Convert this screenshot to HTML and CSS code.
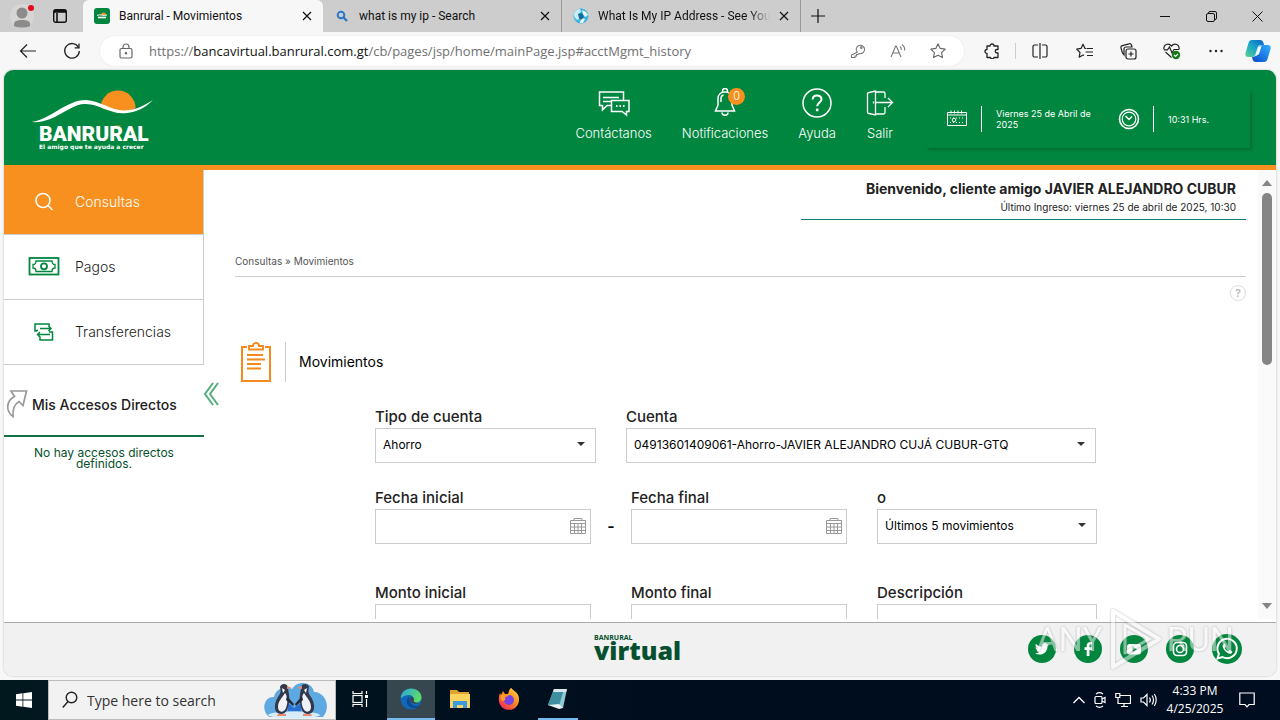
FILE: index.html
```html
<!DOCTYPE html>
<html lang="es">

<head>
    <meta charset="UTF-8">
    <meta name="viewport" content="width=device-width, initial-scale=1.0">
    <title>Banrural - Movimientos</title>
    <link rel="stylesheet" href="styles.css">
</head>

<body>
    <!-- Pestañas -->
    <div class="tab-bar">
        <button class="profile" aria-label="Perfil">
            <svg width="34" height="32" viewBox="0 0 34 32"><circle cx="17" cy="16" r="12" fill="#d8d6d4"/><circle cx="17" cy="13" r="5.5" fill="#8b8b8b"/><path d="M9 26v-2c0-3 3-4 8-4s8 1 8 4v2c-4 2-12 2-16 0z" fill="#8b8b8b"/><circle cx="26" cy="8" r="3" fill="#e30b17"/></svg>
        </button>
        <button class="tab-actions" aria-label="Pestañas">
            <svg width="16" height="16" viewBox="0 0 16 16" fill="none" stroke="#111" stroke-width="1.4"><rect x="1.7" y="1.7" width="12.6" height="12.6" rx="2"/><path d="M2 4h12M5 5v9" stroke-width="1.6"/><path d="M2 3h12" stroke-width="2"/></svg>
        </button>
        <div class="tab active">
            <svg width="16" height="16" viewBox="0 0 16 16"><rect width="16" height="16" rx="3" fill="#00863e"/><path d="M7 7a2.500 2.500 0 0 1 5 0z" fill="#f7901e"/><path d="M3 7.500c3-2 6 1 10-.5" stroke="#fff" fill="none"/><path d="M4 9.500h8" stroke="#fff" stroke-width="1.600"/></svg>
            <span class="tab-title">Banrural - Movimientos</span>
            <button class="tab-close" aria-label="Cerrar"><svg width="10" height="10" viewBox="0 0 10 10" stroke="#111" stroke-width="1.2"><path d="M1 1l8 8M9 1l-8 8"/></svg></button>
        </div>
        <div class="tab">
            <svg width="16" height="16" viewBox="0 0 16 16" fill="none" stroke="#2f78c4"><circle cx="7" cy="7" r="3.300" stroke-width="2"/><path d="M9.500 9.500l3.500 3.500" stroke-width="2.400"/></svg>
            <span class="tab-title">what is my ip - Search</span>
            <button class="tab-close" aria-label="Cerrar"><svg width="10" height="10" viewBox="0 0 10 10" stroke="#111" stroke-width="1.2"><path d="M1 1l8 8M9 1l-8 8"/></svg></button>
        </div>
        <div class="tab">
            <svg width="16" height="16" viewBox="0 0 16 16"><circle cx="8" cy="8" r="7.500" fill="#3fb4dc"/><path d="M1 6c1-3 3-5 6-5l1 3-3 2 2 3-2 3C2 11 1 9 1 6z" fill="#c9eef8"/><path d="M9 2l4 2 2 3-3 2-2-3zM8 10l4 1-2 4H7z" fill="#e9f8fc"/><path d="M5 6l4-1 2 4-3 3-2-2z" fill="#146b9c"/></svg>
            <span class="tab-title fade">What Is My IP Address - See Your</span>
            <button class="tab-close" aria-label="Cerrar"><svg width="10" height="10" viewBox="0 0 10 10" stroke="#111" stroke-width="1.2"><path d="M1 1l8 8M9 1l-8 8"/></svg></button>
        </div>
        <button class="new-tab" aria-label="Nueva pestaña"><svg width="14" height="14" viewBox="0 0 14 14" stroke="#111" stroke-width="1.200"><path d="M7 0v14M0 7h14"/></svg></button>
        <div class="window-buttons">
            <button aria-label="Minimizar"><svg width="10" height="10" viewBox="0 0 10 10" stroke="#111"><path d="M0 5.500h10"/></svg></button>
            <button aria-label="Restaurar"><svg width="11" height="11" viewBox="0 0 11 11" fill="none" stroke="#111"><rect x=".5" y="2.500" width="8" height="8" rx="1.500"/><path d="M2.500 2.500v-.5A1.500 1.500 0 0 1 4 .5h5A1.500 1.500 0 0 1 10.500 2v5A1.500 1.500 0 0 1 9 8.500"/></svg></button>
            <button aria-label="Cerrar ventana"><svg width="11" height="11" viewBox="0 0 11 11" stroke="#111"><path d="M.5.5l10 10M10.500.5l-10 10"/></svg></button>
        </div>
    </div>

    <!-- Barra de direcciones -->
    <div class="toolbar">
        <button class="tool" aria-label="Atrás"><svg width="18" height="16" viewBox="0 0 18 16" fill="none" stroke="#222" stroke-width="1.200"><path d="M17 8H1.500M8 1.500L1.500 8 8 14.500"/></svg></button>
        <button class="tool" aria-label="Actualizar"><svg width="18" height="18" viewBox="0 0 18 18" fill="none" stroke="#222" stroke-width="1.300"><path d="M15.500 5.500A7.300 7.300 0 1 0 16.300 9"/><path d="M16 1.500v4.300h-4.300"/></svg></button>
        <div class="address">
            <svg class="lock" width="14" height="16" viewBox="0 0 14 16" fill="none" stroke="#666" stroke-width="1.200"><rect x="1" y="5.500" width="12" height="9.500" rx="1.500"/><path d="M4 5.500V4a3 3 0 0 1 6 0v1.500"/><circle cx="7" cy="10.300" r=".7" fill="#666"/></svg>
            <div class="url" role="textbox" contenteditable="true" spellcheck="false" aria-label="Dirección">https://<b>bancavirtual.banrural.com.gt</b>/cb/pages/jsp/home/mainPage.jsp#acctMgmt_history</div>
            <button aria-label="Contraseñas"><svg width="16" height="16" viewBox="0 0 16 16" fill="none" stroke="#777" stroke-width="1.100"><path d="M7.200 9.200a4.200 4.200 0 1 1 2 1.300L8 11.500H6.500V13H5v1.500H1.500V12z" /><circle cx="11.300" cy="4.700" r=".8"/></svg></button>
            <button aria-label="Leer en voz alta"><svg width="17" height="16" viewBox="0 0 17 16" fill="none" stroke="#777" stroke-width="1.100"><path d="M1 14L5.700 3h.6L11 14M2.800 10h6.400M10 3.500c1 .8 1.500 2 1.300 3.500M12 1.500c2 1.500 3 3.500 2.600 6"/></svg></button>
            <button aria-label="Favorito"><svg width="16" height="16" viewBox="0 0 16 16" fill="none" stroke="#666" stroke-width="1.100" stroke-linejoin="round"><path d="M8 .8l2.200 4.600 5 .7-3.600 3.500.9 5L8 12.200l-4.500 2.400.9-5L.8 6.100l5-.7z"/></svg></button>
        </div>
        <button class="tool" aria-label="Extensiones"><svg width="16" height="16" viewBox="0 0 16 16" fill="none" stroke="#222" stroke-width="1.300" stroke-linejoin="round"><path d="M3 3h3a2 2 0 1 1 4 0h4v3.500h-1a1.700 1.700 0 1 0 0 3.500h1v4.500h-4a1.800 1.800 0 0 1-3.500 0H3V10.500a2 2 0 1 1 0-4z"/></svg></button>
        <span class="divider"></span>
        <button class="tool" aria-label="Pantalla dividida"><svg width="16" height="16" viewBox="0 0 16 16" fill="none" stroke="#222" stroke-width="1.200"><path d="M6 2H2.500A1.500 1.500 0 0 0 1 3.500v9A1.500 1.500 0 0 0 2.500 14H6M10 2h3.500A1.500 1.500 0 0 1 15 3.500v9a1.500 1.500 0 0 1-1.500 1.500H10M8 0v16"/></svg></button>
        <button class="tool" aria-label="Favoritos"><svg width="17" height="16" viewBox="0 0 17 16" fill="none" stroke="#222" stroke-width="1.200" stroke-linejoin="round"><path d="M10 5.500L9 5.400 7 1.200 5 5.400l-4.300.7L4 9.500l-.8 4.700L7 12l1 .6M10.500 5.500H17M9.500 9H17M11 12.500h6"/></svg></button>
        <button class="tool" aria-label="Colecciones"><svg width="17" height="17" viewBox="0 0 17 17" fill="none" stroke="#222" stroke-width="1.200"><rect x="6" y="6" width="10" height="10" rx="2"/><path d="M11 8.500v5M8.500 11h5M4 12L2.500 10 1 5a2 2 0 0 1 1.300-2.400L9 .8A2 2 0 0 1 11.500 2l.5 2H6a2 2 0 0 0-2 2z"/></svg></button>
        <button class="tool" aria-label="Rendimiento"><svg width="18" height="18" viewBox="0 0 18 18" fill="none" stroke="#222" stroke-width="1.200"><path d="M1 7.500C0 2.500 5.500.5 8.500 4 11.500.5 17 2.500 16 7.500M2.500 10l6 5.500M1 7.800h3.500L6.500 5 9 11l2-3.500h5"/><circle cx="13" cy="13" r="4.200" fill="#127a12" stroke="none"/><path d="M11 13l1.500 1.500L15 12" stroke="#fff"/></svg></button>
        <button class="tool" aria-label="Más"><svg width="14" height="4" viewBox="0 0 14 4" fill="#222"><circle cx="1.500" cy="2" r="1.200"/><circle cx="7" cy="2" r="1.200"/><circle cx="12.500" cy="2" r="1.200"/></svg></button>
        <button class="tool copilot" aria-label="Copilot"><svg width="26" height="24" viewBox="0 0 26 24"><defs><linearGradient id="cpA" x1="0" y1="1" x2="1" y2="0"><stop offset="0" stop-color="#5fd38d"/><stop offset=".5" stop-color="#1aa7c8"/><stop offset="1" stop-color="#0a5fc4"/></linearGradient><linearGradient id="cpB" x1="0" y1="1" x2="1" y2="0"><stop offset="0" stop-color="#0b49c8"/><stop offset="1" stop-color="#2fb0ff"/></linearGradient></defs><path d="M7 1h8c2 0 3 1 3.500 3l.5 2h-3c-2 0-3 1-3.500 3l-2 6c-.5 2-2 3-4 3H3c-2 0-3-1.500-2.500-4L3.500 4C4 2 5 1 7 1z" fill="url(#cpA)"/><path d="M19 23h-8c-2 0-3-1-3.500-3L7 18c3 0 4-1 4.500-3l2-6c.5-2 2-3 4-3H23c2 0 3 1.500 2.500 4l-3 10c-.5 2-1.500 3-3.500 3z" fill="url(#cpB)"/><path d="M11 16l2.500-8 3-1-2.500 8-3 2z" fill="#fff"/></svg></button>
    </div>

    <!-- Banca virtual -->
    <div class="page">
        <header class="header">
            <a href="#" class="logo" aria-label="Banrural">
                <svg width="124" height="66" viewBox="0 0 124 66">
                    <circle cx="88" cy="23" r="17.500" fill="#f7901e"/>
                    <path d="M66 20C78 27 98 32 122 14V40H40z" fill="#00863e"/>
                    <path d="M1 37C20 35 36 15 56 15c16 1 28 13 43 10 9-1 16-5 24-10-9 9-17 12-26 13C79 30 70 18 54 19 38 20 24 39 1 37z" fill="#fff"/>
                    <text x="9" y="56" class="logo-name">BANRURAL</text>
                    <text x="9" y="64" class="logo-slogan">El amigo que te ayuda a crecer</text>
                </svg>
            </a>
            <nav class="top-nav">
                <a href="#">
                    <svg width="32" height="30" viewBox="0 0 32 30" fill="none" stroke="#fff" stroke-width="1.500"><path d="M13 17.500H9L4.500 22v-4.500H1.500V4h24v8M5 9.500h16M5 13.500h8"/><path d="M13.500 12.500H31v11h-2.500v3.500L24 23.500H13.500z"/><path d="M18 18h1.500M21.500 18H23M25 18h1.500" stroke-width="2"/></svg>
                    Contáctanos
                </a>
                <a href="#">
                    <span class="bell">
                        <svg width="24" height="30" viewBox="0 0 24 30" fill="none" stroke="#fff" stroke-width="1.500"><path d="M9.500 4V3a2.500 2.500 0 0 1 5 0v1.500M5 17v-6.500c0-4 3-6.500 7-6.500s7 2.500 7 6.500V17l2.500 6h-19zM9 24.500c0 3.500 6 3.500 6 0M8 14v-4c0-1.500 1-2.500 2.500-3"/></svg>
                        <span class="badge">0</span>
                    </span>
                    Notificaciones
                </a>
                <a href="#">
                    <svg width="30" height="30" viewBox="0 0 30 30" fill="none" stroke="#fff"><circle cx="15" cy="15" r="14" stroke-width="1.500"/><path d="M10.700 11.500c0-5.500 8.800-5.300 8.800-.3 0 3.200-4.300 3.400-4.300 7" stroke-width="2"/><circle cx="15.200" cy="22" r=".7" stroke-width="1.500"/></svg>
                    Ayuda
                </a>
                <a href="#">
                    <svg width="28" height="30" viewBox="0 0 28 30" fill="none" stroke="#fff" stroke-width="1.300"><path d="M3 4.500L9.500 3v24L3 25.500c-1 0-1.500-.5-1.500-1.500V6c0-1 .5-1.500 1.500-1.500zM9.500 4h8a1.500 1.500 0 0 1 1.500 1.500V10M19 19v5.500a1.500 1.500 0 0 1-1.500 1.500h-8M10 14.500h16M22 10l4.500 4.500L22 19M7.500 13.500v2"/></svg>
                    Salir
                </a>
            </nav>
            <div class="clock-box">
                <svg width="22" height="20" viewBox="0 0 22 20" fill="none" stroke="#fff"><path d="M1.500 3.500h19v13h-19zM1.500 6h19M5 1.500v3M8.500 1.500v3M12 1.500v3M15.500 1.500v3"/><circle cx="8" cy="11" r="1.800"/><path d="M4 9h14M4 13.500h14" stroke-dasharray="1 2"/></svg>
                <span class="date">Viernes 25 de Abril de 2025</span>
                <svg width="22" height="22" viewBox="0 0 22 22" fill="none" stroke="#fff"><circle cx="11" cy="11" r="9.500" stroke-width="1.600"/><circle cx="11" cy="11" r="6.800" stroke-width="1.200"/><path d="M7.500 8l3.500 3.500L14 8.500" stroke-width="1.500"/></svg>
                <span class="time">10:31 Hrs.</span>
            </div>
        </header>

        <div class="middle">
            <aside class="sidebar">
                <nav class="menu">
                    <a href="#" class="selected">
                        <svg width="32" height="24" viewBox="0 0 32 24" fill="none" stroke="#fff" stroke-width="1.600"><circle cx="15" cy="11.500" r="7"/><path d="M20 16.500l4.500 4.500"/></svg>
                        Consultas
                    </a>
                    <a href="#">
                        <svg width="32" height="24" viewBox="0 0 32 24" fill="none" stroke="#00863e" stroke-width="1.800"><rect x="1.500" y="4" width="29" height="16.500"/><path d="M8 7h16c0 2.500 1 3.500 3 3.500v3.500c-2 0-3 1-3 3.500H8c0-2.500-1-3.500-3-3.500v-3.500c2 0 3-1 3-3.500z" stroke-width="1.300"/><circle cx="16" cy="12.300" r="3"/></svg>
                        Pagos
                    </a>
                    <a href="#">
                        <svg width="32" height="24" viewBox="0 0 32 24" fill="none" stroke="#00863e" stroke-width="1.500"><path d="M9 12H7V5h14v3M7 11.500h3M12 9.500h11M20.500 7l2.500 2.500-2.500 2.500M21 13h3.500v8H12v-3.500M22 15.500H9.500M12 13l-2.500 2.500L12 18"/></svg>
                        Transferencias
                    </a>
                </nav>
                <h2 class="shortcuts">
                    <svg width="22" height="30" viewBox="0 0 22 30" fill="none" stroke="#999" stroke-width="1.700"><path d="M5 2h15.500L17 16.500l-4-4c-5 3-6.500 8-6 15C-.5 22 0 12 8.500 7.500z"/></svg>
                    Mis Accesos Directos
                </h2>
                <p class="no-shortcuts">No hay accesos directos definidos.</p>
                <button class="collapse" aria-label="Ocultar menú"><svg width="16" height="24" viewBox="0 0 16 24" fill="none" stroke="#55ad7c" stroke-width="2"><path d="M10 1L2 12l8 11M15 1L7 12l8 11"/></svg></button>
            </aside>

            <main class="content">
                <div class="welcome">
                    <h1>Bienvenido, cliente amigo JAVIER ALEJANDRO CUBUR</h1>
                    <p>Último Ingreso: viernes 25 de abril de 2025, 10:30</p>
                </div>
                <div class="breadcrumb">Consultas » Movimientos</div>
                <button class="help" aria-label="Ayuda">?</button>
                <div class="section-title">
                    <svg width="32" height="42" viewBox="0 0 32 42" fill="none" stroke="#f28a1e" stroke-width="2"><path d="M7 6H2v34h28V6h-5"/><path d="M9 8.500V5h4c0-4 6-4 6 0h4v3.500z" stroke-width="1.800"/><path d="M7 14h16M7 18.500h18M7 23h14M7 27.500h14"/></svg>
                    <h2>Movimientos</h2>
                </div>

                <form class="search-form">
                    <div class="form-row">
                        <div class="form-group">
                            <label for="tipo">Tipo de cuenta</label>
                            <div class="select-box"><select id="tipo"><option>Ahorro</option></select></div>
                        </div>
                        <div class="form-group wide">
                            <label for="cuenta">Cuenta</label>
                            <div class="select-box"><select id="cuenta"><option>04913601409061-Ahorro-JAVIER ALEJANDRO CUJÁ CUBUR-GTQ</option></select></div>
                        </div>
                    </div>
                    <div class="form-row dates">
                        <div class="form-group">
                            <label for="fechaInicial">Fecha inicial</label>
                            <div class="date-box"><input type="text" id="fechaInicial"><svg width="18" height="18" viewBox="0 0 18 18" fill="none" stroke="#999"><path d="M1.500 3.500h15v13h-15zM1.500 6.500h15M1.500 10h15M1.500 13.500h15M5.500 6v10M9 6v10M12.500 6v10M5 1.500h8v2H5z"/></svg></div>
                        </div>
                        <span class="dash">-</span>
                        <div class="form-group">
                            <label for="fechaFinal">Fecha final</label>
                            <div class="date-box"><input type="text" id="fechaFinal"><svg width="18" height="18" viewBox="0 0 18 18" fill="none" stroke="#999"><path d="M1.500 3.500h15v13h-15zM1.500 6.500h15M1.500 10h15M1.500 13.500h15M5.500 6v10M9 6v10M12.500 6v10M5 1.500h8v2H5z"/></svg></div>
                        </div>
                        <div class="form-group last">
                            <label for="ultimos">o</label>
                            <div class="select-box"><select id="ultimos"><option>Últimos 5 movimientos</option></select></div>
                        </div>
                    </div>
                    <div class="form-row amounts">
                        <div class="form-group">
                            <label for="montoInicial">Monto inicial</label>
                            <input type="text" id="montoInicial">
                        </div>
                        <span class="dash"></span>
                        <div class="form-group">
                            <label for="montoFinal">Monto final</label>
                            <input type="text" id="montoFinal">
                        </div>
                        <div class="form-group last">
                            <label for="descripcion">Descripción</label>
                            <input type="text" id="descripcion">
                        </div>
                    </div>
                </form>
            </main>

            <div class="scrollbar">
                <svg width="10" height="6" viewBox="0 0 10 6" fill="#858585"><path d="M5 0l5 6H0z"/></svg>
                <div class="thumb"></div>
                <svg width="10" height="6" viewBox="0 0 10 6" fill="#858585"><path d="M5 6L0 0h10z"/></svg>
            </div>
        </div>

        <footer class="footer">
            <div class="virtual-logo">
                <span>BANRURAL</span>
                <strong>virtual</strong>
            </div>
            <div class="social">
                <a href="#" aria-label="Twitter"><svg width="28" height="28" viewBox="0 0 28 28"><circle cx="14" cy="14" r="14" fill="#00863e"/><path d="M21 9.500c-.5.300-1 .4-1.600.5.600-.4 1-.9 1.200-1.600-.6.300-1.200.6-1.800.7a2.900 2.900 0 0 0-5 2.600c-2.400-.1-4.500-1.300-5.900-3-.8 1.400-.4 3 .9 3.800-.5 0-.9-.1-1.300-.3 0 1.400 1 2.500 2.300 2.800-.4.100-.9.100-1.300 0 .4 1.200 1.400 2 2.700 2-1.200.9-2.600 1.300-4.200 1.200 5.700 3.500 12.700 0 12.500-7.200.6-.4 1.100-.9 1.500-1.500z" fill="#fff"/></svg></a>
                <a href="#" aria-label="Facebook"><svg width="28" height="28" viewBox="0 0 28 28"><circle cx="14" cy="14" r="14" fill="#00863e"/><path d="M15.500 21v-6h2.200l.4-2.700h-2.600v-1.500c0-.8.400-1.300 1.300-1.300H18V7.200C14.800 6.600 12.700 8 12.700 10.500v1.800h-2.200V15h2.200v6z" fill="#fff"/></svg></a>
                <a href="#" aria-label="YouTube"><svg width="28" height="28" viewBox="0 0 28 28"><circle cx="14" cy="14" r="14" fill="#00863e"/><rect x="7" y="9" width="14" height="10.500" rx="2.500" fill="#fff"/><path d="M12.500 11.500v5.500l4.500-2.800z" fill="#00863e"/></svg></a>
                <a href="#" aria-label="Instagram"><svg width="28" height="28" viewBox="0 0 28 28" fill="none" stroke="#fff"><circle cx="14" cy="14" r="14" fill="#00863e" stroke="none"/><rect x="7.500" y="7.500" width="13" height="13" rx="3.500" stroke-width="1.600"/><circle cx="14" cy="14" r="3.500" stroke-width="1.600"/><circle cx="17.700" cy="10.300" r=".4"/></svg></a>
                <a href="#" aria-label="WhatsApp"><svg width="30" height="30" viewBox="0 0 30 30"><circle cx="15" cy="15" r="15" fill="#00863e"/><path d="M5.500 24.500l1.400-4.800A9.700 9.700 0 1 1 10.400 23z" fill="none" stroke="#fff" stroke-width="2"/><path d="M11.500 10c-1.500 1-1.200 3.300.8 6 2.300 3 5.500 4.800 7.200 3.300 1-.9 1-1.800.2-2.300l-2-1-1.500 1.300c-1.500-.5-2.800-1.800-3.500-3.300l1-1.300-.8-2.500c-.3-.5-.8-.6-1.400-.2z" fill="#fff"/></svg></a>
            </div>
        </footer>

        <div class="watermark" aria-hidden="true">
            <span>ANY</span>
            <svg width="60" height="64" viewBox="0 0 60 64" fill="none" stroke="#fff" stroke-width="4" stroke-linejoin="round"><path d="M8 60V4l46 28z"/><path d="M20 46V18l24 14z" stroke-width="3"/></svg>
            <span>RUN</span>
        </div>
    </div>

    <!-- Barra de tareas -->
    <div class="taskbar">
        <button class="start" aria-label="Inicio"><svg width="16" height="16" viewBox="0 0 16 16" fill="#fff"><path d="M0 2.200l6.500-.9v6.200H0zM7.300 1.200L16 0v7.500H7.300zM0 8.400h6.500v6.300L0 13.800zM7.300 8.400H16V16l-8.700-1.200z"/></svg></button>
        <label class="search">
            <svg width="16" height="18" viewBox="0 0 16 18" fill="none" stroke="#222" stroke-width="1.400"><circle cx="9.500" cy="6.500" r="5.300"/><path d="M6 10.500L.8 16.500"/></svg>
            <input type="text" placeholder="Type here to search" aria-label="Type here to search">
            <svg width="64" height="38" viewBox="0 0 64 38">
                <path d="M6 36C-3 28 2 15 11 16c2-9 12-12 18-8 5-9 20-8 22 3 12 0 17 16 9 25z" fill="#5fa9e3"/>
                <ellipse cx="31" cy="34" rx="26" ry="3.500" fill="#d7ecf8"/>
                <path d="M25 30v-8l6 5 7-5v8z" fill="#2a6fd0"/>
                <path d="M17 6c1-4 8-4 8 1 0 3 2 7 1 14-1 8-3 12-8 12-7 0-8-9-3-17 3-4 3-6 2-10z" fill="#32384a"/>
                <path d="M22 12c3 4 3 10 1 15-2 5-8 5-8-1s4-9 7-14z" fill="#eef1f5"/>
                <path d="M46 6c-1-4-8-4-8 1 0 3-2 7-1 14 1 8 3 12 8 12 7 0 8-9 3-17-3-4-3-6-2-10z" fill="#32384a"/>
                <path d="M41 12c-3 4-3 10-1 15 2 5 8 5 8-1s-4-9-7-14z" fill="#eef1f5"/>
                <path d="M24 15l7 8-1 2-7-6zM39 15l-7 8 1 2 7-6z" fill="#252b3b"/>
                <path d="M24 5l5 2-5 1zM39 5l-5 2 5 1zM15 33h8v2h-9zM40 33h8l1 2h-9z" fill="#e98a6d"/>
                <path d="M19 7l3 2-2 3zM44 7l-3 2 2 3z" fill="#fff"/>
            </svg>
        </label>
        <button class="app task-view" aria-label="Vista de tareas"><svg width="18" height="16" viewBox="0 0 18 16" fill="none" stroke="#fff" stroke-width="1.200"><rect x="2" y="4.500" width="9" height="7"/><path d="M2 0v2.500h9V0M2 16v-2.500h9V16M15.500 0v3M15.500 8v8"/><path d="M15.500 4v3" stroke-width="3"/></svg></button>
        <button class="app active" aria-label="Edge"><svg width="24" height="24" viewBox="0 0 24 24"><defs><linearGradient id="edA" x1="0" y1="0" x2="1" y2=".4"><stop offset="0" stop-color="#2aa4e0"/><stop offset="1" stop-color="#5bdb6b"/></linearGradient></defs><circle cx="12" cy="12" r="10.500" fill="#1267b8"/><path d="M1.700 11C2 5 7 1.500 12 1.500c6 0 10.500 4 10.500 9 0 4-4 6-7.500 5-1.500-.5-1.500-1.500-.8-2.500C16 9 10 5 1.700 11z" fill="url(#edA)"/><path d="M10 9.500c-4 3-3 10 4 11.500 3 .4 5.500-1 6.500-2.500-4 1.500-10 .5-10.500-9z" fill="#0c4a94"/><path d="M12 9.500c-2 3-.5 6.500 3 7 3 .5 5-.5 6.500-1.500-2 1-6 1-7-1 1.500-1.500 0-4-2.500-4.500z" fill="#36474f"/></svg></button>
        <button class="app" aria-label="Explorador"><svg width="22" height="20" viewBox="0 0 22 20"><path d="M1 1h7l2 2h10v6H1z" fill="#e0a32e"/><path d="M1 5h20v14H1z" fill="#fbd45f"/><path d="M4 19v-7h14v7h-4v-3H8v3z" fill="#3b9adf"/></svg></button>
        <button class="app" aria-label="Firefox"><svg width="24" height="24" viewBox="0 0 24 24"><defs><linearGradient id="ffA" x1="1" y1="0" x2=".2" y2="1"><stop offset="0" stop-color="#ffe14d"/><stop offset=".5" stop-color="#ff8a1f"/><stop offset="1" stop-color="#f0265c"/></linearGradient></defs><path d="M14 .8c2 3 5 3.500 7 7 3 6-.5 15-9 15S-.5 14 3 6l1 2 2-4 2 3h3c1-3 1-4 3-6.200z" fill="url(#ffA)"/><circle cx="12" cy="13" r="5" fill="#7542e5"/><path d="M4 8c3-2 7-1 8 1l-4 1c1 2 0 4-3 4-2-2-2-4-1-6z" fill="#ff9a28"/></svg></button>
        <button class="app open" aria-label="Bloc de notas"><svg width="24" height="24" viewBox="0 0 24 24"><path d="M8 2h13l-4 19L2 18z" fill="#8dcbd5"/><path d="M8 2h10L13 19 2 18z" fill="#3e8f9f"/><path d="M8 2h13l-1 3H7z" fill="#d7e7ea"/><path d="M2 18l11-1 4 4-4 1z" fill="#e6f1f2"/></svg></button>
        <div class="tray">
            <svg width="12" height="8" viewBox="0 0 12 8" fill="none" stroke="#fff" stroke-width="1.300"><path d="M.5 7L6 1.500 11.500 7"/></svg>
            <svg width="12" height="16" viewBox="0 0 12 16" fill="none" stroke="#fff" stroke-width="1.200"><rect x="1" y="4.500" width="7" height="7" rx="1"/><path d="M8 7l3-1.500v5L8 9M2 2c2-1.500 5-1.500 7 0M2 14c2 1.500 5 1.500 7 0"/></svg>
            <svg width="16" height="16" viewBox="0 0 16 16" fill="none" stroke="#fff" stroke-width="1.200"><path d="M5 3.500h10.500v8H3V7M9 11.500V14M6 14.500h7M.8 1.500h4v4h-4zM3 5.500V9"/></svg>
            <svg width="17" height="14" viewBox="0 0 17 14" fill="none" stroke="#fff" stroke-width="1.200"><path d="M1 5h2.500L7 1.500v11L3.500 9H1zM9.500 4.500c1 1.500 1 3.500 0 5M12 2.500c2 2.500 2 6.500 0 9M14.300 1c2.500 3.500 2.500 8.500 0 12"/></svg>
            <div class="tray-clock">4:33 PM<br>4/25/2025</div>
            <svg width="16" height="16" viewBox="0 0 16 16" fill="none" stroke="#fff" stroke-width="1.200"><path d="M.8 1h14.400v11.500H10L8 14.800l-2-2.300H.8z"/></svg>
        </div>
    </div>
</body>

</html>
```
FILE: styles.css
```css
* {
    box-sizing: border-box;
}

body {
    display: flex;
    flex-direction: column;
    height: 100vh;
    margin: 0;
    overflow: hidden;
    background-color: #f7f7f7;
    font-family: Inter, "Liberation Sans", sans-serif;
    color: #222;
}

button {
    display: flex;
    align-items: center;
    justify-content: center;
    padding: 0;
    border: none;
    background: none;
    cursor: pointer;
}

a {
    color: inherit;
    text-decoration: none;
}

h1, h2, p {
    margin: 0;
}

svg {
    flex: none;
}

/* pestañas */
.tab-bar {
    display: flex;
    flex: none;
    height: 32px;
    background-color: #cdcdcd;
    font-family: Roboto, "Noto Sans", sans-serif;
    font-size: 12px;
}

.profile {
    width: 44px;
}

.tab-actions {
    width: 39px;
    padding-right: 7px;
}

.tab {
    display: flex;
    align-items: center;
    gap: 9px;
    width: 239px;
    padding: 0 11px;
    color: #111;
    border-right: 1px solid #999;
}

.tab.active {
    width: 240px;
    background-color: #f7f7f7;
    border-right: none;
    border-radius: 6px 6px 0 0;
}

.tab-title {
    flex: 1;
    overflow: hidden;
    white-space: nowrap;
}

.fade {
    mask-image: linear-gradient(to right, #000 88%, transparent);
}

.new-tab {
    width: 34px;
}

.window-buttons {
    display: flex;
    margin-left: auto;
}

.window-buttons button {
    width: 46px;
}

/* direcciones */
.toolbar {
    display: flex;
    flex: none;
    align-items: center;
    height: 38px;
    padding: 0 2px 0 6px;
}

.tool {
    width: 44px;
    height: 32px;
}

.address {
    display: flex;
    flex: 1;
    align-items: center;
    height: 30px;
    margin: 0 6px;
    padding: 0 6px 0 19px;
    background-color: #fff;
    border-radius: 15px;
    box-shadow: 0 0 2px #e4e4e4;
}

.address button {
    width: 40px;
    height: 28px;
}

.url {
    flex: 1;
    margin-left: 16px;
    overflow: hidden;
    white-space: nowrap;
    font-family: "Open Sans", "Noto Sans", sans-serif;
    font-size: 13px;
    color: #707070;
}

.url b {
    font-weight: normal;
    color: #111;
}

.divider {
    width: 1px;
    height: 16px;
    margin: 0 2px 0 1px;
    background-color: #ccc;
}

.copilot {
    width: 40px;
}

/* página */
.page {
    position: relative;
    display: flex;
    flex: 1;
    flex-direction: column;
    min-height: 0;
    margin: 0 4px 4px;
    overflow: hidden;
    background-color: #fff;
    border-radius: 9px;
    box-shadow: 0 0 2px #aaa;
}

.header {
    display: flex;
    flex: none;
    height: 100px;
    padding: 0 26px;
    background-color: #00863e;
    border-bottom: 5px solid #f7901e;
    color: #fff;
}

.logo {
    padding-top: 15px;
}

.logo-name {
    font-family: Roboto, sans-serif;
    font-size: 21px;
    font-weight: 900;
    fill: #fff;
}

.logo-slogan {
    font-family: "DejaVu Sans", sans-serif;
    font-size: 6px;
    font-weight: bold;
    fill: #fff;
}

.top-nav {
    display: flex;
    gap: 30px;
    margin-left: auto;
    padding-top: 18px;
    font-size: 13px;
    font-weight: 300;
    line-height: 16px;
}

.top-nav a {
    display: flex;
    flex-direction: column;
    align-items: center;
    gap: 7px;
}

.bell {
    position: relative;
    height: 30px;
}

.badge {
    position: absolute;
    top: 0;
    left: 15px;
    width: 17px;
    height: 17px;
    border-radius: 50%;
    background-color: #f7901e;
    font-size: 11px;
    line-height: 17px;
    text-align: center;
}

.clock-box {
    display: flex;
    align-items: center;
    width: 324px;
    height: 58px;
    margin: 20px 0 0 32px;
    padding: 0 20px;
    box-shadow: 2px 2px 3px rgba(0, 0, 0, 0.2);
    font-size: 9px;
    line-height: 11px;
}

.date,
.time {
    display: flex;
    flex: none;
    align-items: center;
    height: 26px;
    margin-left: 13px;
    padding-left: 14px;
    border-left: 1px solid #fff;
}

.date {
    width: 124px;
    margin-right: 13px;
}

.middle {
    display: flex;
    flex: 1;
    min-height: 0;
    padding-bottom: 3px;
}

/* menú */
.sidebar {
    position: relative;
    flex: none;
    width: 200px;
}

.menu a {
    display: flex;
    align-items: center;
    gap: 15px;
    height: 65px;
    padding: 0 0 2px 24px;
    border-right: 1px solid #ccc;
    border-bottom: 1px solid #ccc;
    font-size: 14px;
    font-weight: 300;
}

.menu .selected {
    background-color: #f7901e;
    color: #fff;
}

.shortcuts {
    display: flex;
    align-items: center;
    gap: 4px;
    height: 72px;
    padding: 8px 0 0 2px;
    border-bottom: 2px solid #127045;
    font-size: 14px;
    font-weight: 500;
    white-space: nowrap;
}

.no-shortcuts {
    padding: 10px 20px;
    color: #06502c;
    font-size: 12px;
    line-height: 11px;
    text-align: center;
}

.collapse {
    position: absolute;
    top: 212px;
    right: -15px;
}

/* contenido */
.content {
    flex: 1;
    min-width: 0;
    padding: 9px 12px 0 31px;
    overflow: hidden;
}

.welcome {
    width: 445px;
    margin-left: auto;
    padding-right: 10px;
    border-bottom: 1px solid #0d7f7a;
    text-align: right;
    white-space: nowrap;
}

.welcome h1 {
    font-size: 14px;
    font-weight: 700;
    line-height: 19px;
}

.welcome p {
    padding-bottom: 3px;
    font-size: 10px;
    line-height: 18px;
}

.breadcrumb {
    margin-top: 32px;
    padding-bottom: 6px;
    border-bottom: 1px solid #ccc;
    color: #555;
    font-size: 10px;
    line-height: 18px;
}

.help {
    width: 16px;
    height: 16px;
    margin: 8px 0 0 auto;
    border: 1px solid #ddd;
    border-radius: 50%;
    color: #bbb;
    font-family: inherit;
    font-size: 11px;
    font-weight: 600;
}

.section-title {
    display: flex;
    align-items: center;
    gap: 13px;
    margin: 40px 0 0 5px;
}

.section-title h2 {
    padding-left: 13px;
    border-left: 1px solid #ccc;
    color: #000;
    font-size: 14px;
    font-weight: 400;
    line-height: 40px;
}

.search-form {
    margin: 25px 0 0 140px;
}

.form-row {
    display: flex;
    gap: 30px;
    margin-bottom: 26px;
}

.form-row.dates {
    margin-bottom: 40px;
}

.form-row.dates,
.form-row.amounts {
    gap: 0;
}

.form-group {
    width: 216px;
}

.form-row:first-child .form-group {
    width: 221px;
}

.form-row:first-child .wide {
    width: 470px;
}

.form-group.last {
    width: 220px;
    margin-left: 30px;
}

.form-group label {
    display: block;
    height: 20px;
    font-size: 15px;
    font-weight: 500;
    line-height: 18px;
    white-space: nowrap;
}

.form-group input,
.form-group select {
    display: block;
    width: 100%;
    height: 35px;
    padding: 0 7px 2px;
    appearance: none;
    background-color: #fff;
    border: 1px solid #ccc;
    border-radius: 0;
    color: #000;
    font-family: inherit;
    font-size: 12px;
}

.select-box,
.date-box {
    position: relative;
}

.select-box::after {
    content: "";
    position: absolute;
    top: 14px;
    right: 11px;
    border: 4px solid transparent;
    border-top: 4px solid #333;
    pointer-events: none;
}

.date-box svg {
    position: absolute;
    top: 8px;
    right: 4px;
}

.dash {
    width: 40px;
    padding-top: 27px;
    color: #000;
    font-weight: 600;
    text-align: center;
}

.scrollbar {
    display: flex;
    flex-direction: column;
    align-items: center;
    width: 18px;
    padding: 10px 0;
    background-color: #fafafa;
}

.thumb {
    width: 10px;
    height: 172px;
    margin: 7px 0 auto;
    border-radius: 5px;
    background-color: #858585;
}

/* pie */
.footer {
    display: flex;
    flex: none;
    align-items: center;
    height: 54px;
    padding: 0 34px 2px 590px;
    background-color: #f1f1f1;
    border-top: 1px solid #aaa;
}

.virtual-logo {
    display: flex;
    flex-direction: column;
    padding-bottom: 4px;
    color: #064f2f;
    font-family: "Open Sans", "Noto Sans", sans-serif;
}

.virtual-logo span {
    font-size: 7px;
    font-weight: 700;
    line-height: 8px;
}

.virtual-logo strong {
    font-size: 25px;
    font-weight: 800;
    line-height: 17px;
}

.social {
    display: flex;
    align-items: center;
    gap: 18px;
    margin-left: auto;
}

.social a {
    display: flex;
}

.watermark {
    position: absolute;
    right: 42px;
    bottom: 5px;
    display: flex;
    align-items: center;
    gap: 2px;
    color: #fff;
    font-family: Roboto, sans-serif;
    font-size: 34px;
    opacity: 0.5;
    filter: drop-shadow(0 0 1px #777);
    pointer-events: none;
}

/* barra de tareas */
.taskbar {
    display: flex;
    flex: none;
    height: 40px;
    background: linear-gradient(to right, #02181f, #000d1e 50%, #000c20);
    font-family: "Open Sans", "Noto Sans", sans-serif;
}

.start,
.app {
    width: 48px;
}

.app {
    margin-right: 1px;
    border-bottom: 2px solid transparent;
}

.app.task-view {
    margin-right: 3px;
}

.app.active {
    background-color: #36474f;
    border-color: #76b9ed;
}

.app.open {
    width: 40px;
    margin-left: 4px;
    border-color: #76b9ed;
}

.search {
    display: flex;
    align-items: center;
    width: 288px;
    padding: 0 8px 0 13px;
    background-color: #f2f2f2;
    border: 1px solid #bbb;
}

.search input {
    flex: 1;
    min-width: 0;
    padding: 0 0 0 9px;
    border: none;
    outline: none;
    background: none;
    font-family: inherit;
    font-size: 14px;
}

.search input::placeholder {
    color: #333;
}

.tray {
    display: flex;
    align-items: center;
    gap: 9px;
    margin-left: auto;
    padding-right: 25px;
}

.tray-clock {
    width: 58px;
    margin-right: 6px;
    color: #fff;
    font-size: 12px;
    line-height: 18px;
    text-align: center;
}
```
